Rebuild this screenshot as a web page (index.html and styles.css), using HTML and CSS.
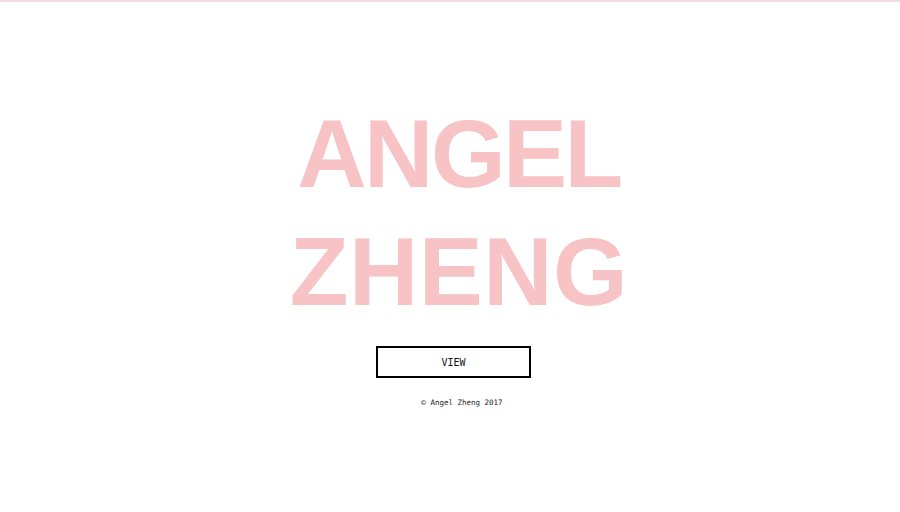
FILE: index.html
```html
<!DOCTYPE html>
<html>
<head>
<meta charset="utf-8">
<link rel="stylesheet" href="styles.css">
</head>
<body>
<div class="topline"></div>
<main class="hero">
  <h1 class="title"><span>ANGEL</span><span class="second">ZHENG</span></h1>
  <a class="view-btn" href="#">VIEW</a>
  <p class="footer">© Angel Zheng 2017</p>
</main>
</body>
</html>
```
FILE: styles.css
```css
html, body {
  margin: 0;
  padding: 0;
  background: #ffffff;
}
.topline {
  height: 2px;
  background: #f4e0e2;
}
.hero {
  display: flex;
  flex-direction: column;
  align-items: center;
  padding-top: 93px;
}
.title {
  margin: 0;
  padding-left: 18px;
  display: flex;
  flex-direction: column;
  align-items: center;
  font-family: "Liberation Sans", Arial, sans-serif;
  font-weight: 700;
  font-size: 96px;
  line-height: 118px;
  letter-spacing: -2.5px;
  color: #f7c3c4;
}
.title .second {
  letter-spacing: 0.5px;
}
.view-btn {
  margin-top: 15px;
  margin-left: 7px;
  box-sizing: border-box;
  width: 155px;
  height: 32px;
  border: 2px solid #000;
  display: flex;
  align-items: center;
  justify-content: center;
  font-family: "DejaVu Sans Mono", "Liberation Mono", monospace;
  font-size: 10px;
  color: #111;
  text-decoration: none;
}
.footer {
  margin: 20px 0 0;
  padding-left: 24px;
  font-family: "DejaVu Sans Mono", "Liberation Mono", monospace;
  font-size: 7.5px;
  color: #222;
}
```
